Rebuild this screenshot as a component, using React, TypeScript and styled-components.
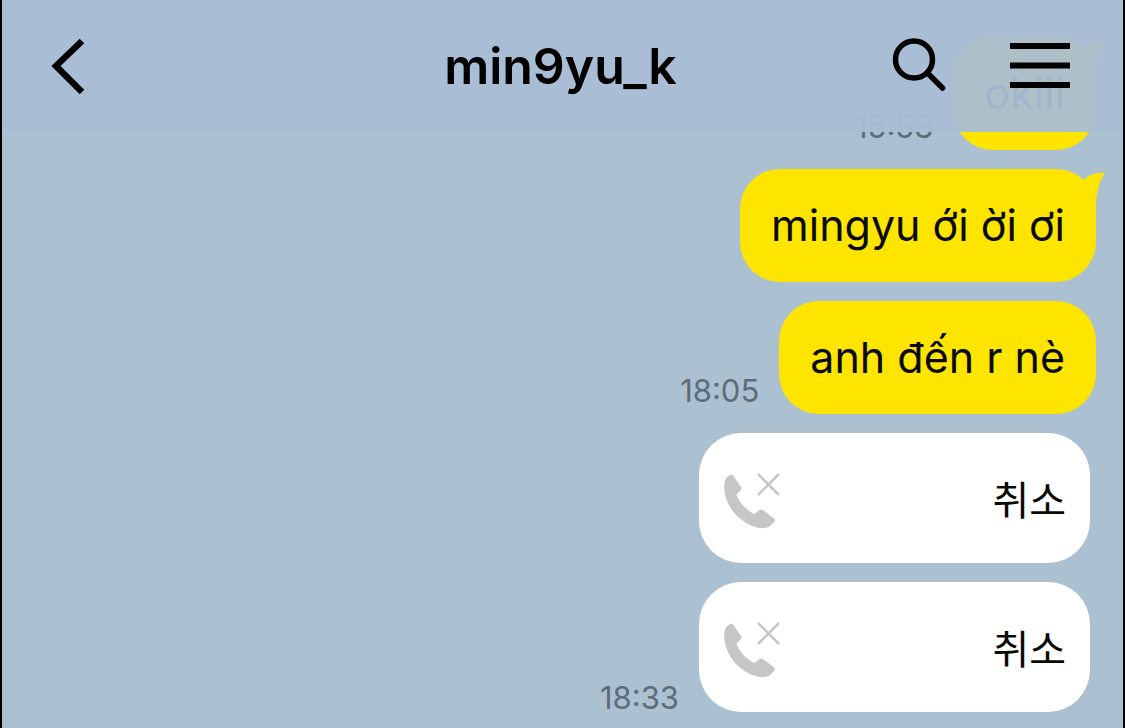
import React from 'react';
import styled, { createGlobalStyle } from 'styled-components';

const GlobalStyle = createGlobalStyle`
  * { box-sizing: border-box; }
  body { margin: 0; background: #abc1d1; }
`;

const Screen = styled.div`
  position: relative;
  min-height: 100vh;
  overflow: hidden;
  background: #abc1d1;
  border: solid #000;
  border-width: 0 2px;
  color: #0a0a05;
  font-family: Inter, 'Noto Sans CJK KR', sans-serif;
`;

const Header = styled.header`
  position: absolute;
  inset: 0 0 auto;
  z-index: 1;
  display: grid;
  grid-template-columns: 1fr auto 1fr;
  align-items: center;
  height: 132px;
  padding: 0 53px 0 49px;
  background: rgba(169, 190, 213, 0.95);
`;

const Title = styled.h1`
  margin: 0;
  font-size: 50px;
  line-height: 64px;
  font-weight: 600;
  color: #000;
`;

const Actions = styled.div`
  display: flex;
  align-items: center;
  justify-content: flex-end;
  gap: 64px;
`;

const IconButton = styled.button`
  display: block;
  justify-self: start;
  padding: 0;
  border: 0;
  background: none;
  color: #000;
  cursor: pointer;

  svg { display: block; }
`;

const Messages = styled.ol`
  display: flex;
  flex-direction: column;
  gap: 19px;
  margin: 0;
  padding: 37px 27px 16px;
  list-style: none;
`;

const Row = styled.li<{ $inset?: boolean }>`
  display: flex;
  align-items: flex-end;
  justify-content: flex-end;
  gap: 20px;
  padding-right: ${(p) => (p.$inset ? 6 : 0)}px;
`;

const Time = styled.time<{ $lifted?: boolean }>`
  padding-bottom: ${(p) => (p.$lifted ? 5 : 0)}px;
  font-size: 31px;
  line-height: ${(p) => (p.$lifted ? 36 : 28)}px;
  color: #5d6c78;
`;

const Bubble = styled.p`
  position: relative;
  margin: 0;
  padding: 28px 31px 29px;
  border-radius: 40px;
  background: #fde500;
  font-size: 43px;
  line-height: 56px;
`;

const Tail = styled.svg`
  position: absolute;
  top: 3px;
  right: -9px;
`;

const CallCard = styled.div`
  display: flex;
  align-items: center;
  justify-content: space-between;
  width: 391px;
  height: 130px;
  padding: 6px 24px 0;
  border-radius: 42px;
  background: #fff;
  font-size: 40px;
  line-height: 56px;
`;

const BubbleTail = () => (
  <Tail width="28" height="40" viewBox="0 0 28 40" aria-hidden="true">
    <path d="M6 8C12 3 19 0 28 1C23 8 19 18 19 40H0Z" fill="#fde500" />
  </Tail>
);

const MissedCallIcon = () => (
  <svg width="60" height="60" viewBox="0 0 60 60" aria-hidden="true">
    <path
      d="M3 7L7 4Q9 3 10.500 5L18 16Q19 17.500 18 19L13.500 23.500C15 30 23 39 31 43L36.500 39Q38.500 38 40 39L51 47.500Q53 49 51 51L46.500 55.500C38 60 25 55 14 45C4 35-2 18 3 7Z"
      fill="#c5c6c8"
    />
    <path d="M35 3L56 24M56 3L35 24" fill="none" stroke="#c5c6c8" strokeWidth="2.500" />
  </svg>
);

interface TextMessage {
  text: string;
  time?: string;
  tail?: boolean;
}

const texts: TextMessage[] = [
  { text: 'okiii', time: '15:53', tail: true },
  { text: 'mingyu ới ời ơi', tail: true },
  { text: 'anh đến r nè', time: '18:05' },
];

const calls: { time?: string }[] = [{}, { time: '18:33' }];

export default function App() {
  return (
    <>
      <GlobalStyle />
      <Screen>
        <Header>
          <IconButton type="button" aria-label="Back">
            <svg width="36" height="60" viewBox="0 0 36 60" aria-hidden="true">
              <path d="M31 5L5 30L31 56" fill="none" stroke="currentColor" strokeWidth="6.500" />
            </svg>
          </IconButton>
          <Title>min9yu_k</Title>
          <Actions>
            <IconButton type="button" aria-label="Search">
              <svg width="54" height="56" viewBox="0 0 54 56" aria-hidden="true">
                <circle cx="22" cy="21.500" r="18.500" fill="none" stroke="currentColor" strokeWidth="5.500" />
                <path d="M35.500 35L50.500 50" fill="none" stroke="currentColor" strokeWidth="5.500" strokeLinecap="round" />
              </svg>
            </IconButton>
            <IconButton type="button" aria-label="Menu">
              <svg width="60" height="46" viewBox="0 0 60 46" aria-hidden="true">
                <path d="M0 3H60M0 22.500H60M0 42H60" fill="none" stroke="currentColor" strokeWidth="6" />
              </svg>
            </IconButton>
          </Actions>
        </Header>
        <Messages>
          {texts.map(({ text, time, tail }) => (
            <Row key={text}>
              {time && <Time $lifted>{time}</Time>}
              <Bubble>
                {tail && <BubbleTail />}
                {text}
              </Bubble>
            </Row>
          ))}
          {calls.map(({ time }, i) => (
            <Row key={i} $inset>
              {time && <Time>{time}</Time>}
              <CallCard>
                <MissedCallIcon />
                <span>취소</span>
              </CallCard>
            </Row>
          ))}
        </Messages>
      </Screen>
    </>
  );
}
